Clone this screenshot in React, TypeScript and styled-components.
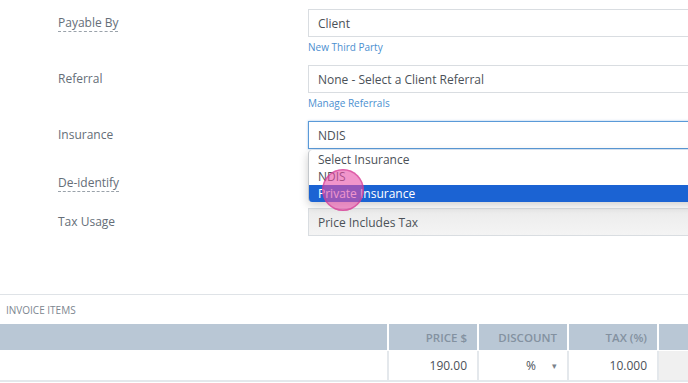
import { createGlobalStyle, styled } from 'styled-components'

const GlobalStyle = createGlobalStyle`
  html, body {
    margin: 0;
    padding: 0;
    background: #ffffff;
  }
  body {
    font-family: 'Open Sans', 'Noto Sans', sans-serif;
  }
`

const App = () => {
  return (
    <Page>
      <GlobalStyle />
      <Form>
        <Row $gap={11}>
          <Label $dotted>Payable By</Label>
          <Field>
            <Input>Client</Input>
            <Hint>New Third Party</Hint>
          </Field>
        </Row>
        <Row $gap={11}>
          <Label>Referral</Label>
          <Field>
            <Input>None - Select a Client Referral</Input>
            <Hint>Manage Referrals</Hint>
          </Field>
        </Row>
        <Row $gap={20}>
          <Label>Insurance</Label>
          <Field>
            <Input $focused>NDIS</Input>
            <Menu>
              <Option>Select Insurance</Option>
              <Option>NDIS</Option>
              <Option $active>Private Insurance</Option>
            </Menu>
            <Cursor />
          </Field>
        </Row>
        <Row $gap={11}>
          <Label $dotted>De-identify</Label>
          <Field>
            <Blank />
          </Field>
        </Row>
        <Row $gap={0}>
          <Label>Tax Usage</Label>
          <Field>
            <Input $disabled>Price Includes Tax</Input>
          </Field>
        </Row>
      </Form>

      <Section>
        <SectionTitle>Invoice Items</SectionTitle>
        <HeadRow>
          <HeadCell />
          <HeadCell>Price $</HeadCell>
          <HeadCell>Discount</HeadCell>
          <HeadCell>Tax (%)</HeadCell>
          <HeadCell />
        </HeadRow>
        <BodyRow>
          <Cell />
          <Cell>190.00</Cell>
          <Cell $split>
            <span>%</span>
            <Caret>▾</Caret>
          </Cell>
          <Cell>10.000</Cell>
          <Cell $muted />
        </BodyRow>
      </Section>
    </Page>
  )
}

const Page = styled.div`
  width: 688px;
  height: 383px;
  overflow: hidden;
  position: relative;
`

const Form = styled.div`
  display: flex;
  flex-direction: column;
  padding: 9px 0 0 58px;
`

const Row = styled.div<{ $gap: number }>`
  display: grid;
  grid-template-columns: 250px 420px;
  margin-bottom: ${p => p.$gap}px;
`

const Label = styled.div<{ $dotted?: boolean }>`
  align-self: start;
  justify-self: start;
  line-height: 28px;
  height: 28px;
  font-size: 12px;
  color: #656e78;
  ${p =>
    p.$dotted &&
    `
    text-decoration: underline dashed #9aa2aa;
    text-underline-offset: 4px;
    text-decoration-thickness: 1px;
  `}
`

const Field = styled.div`
  position: relative;
  display: flex;
  flex-direction: column;
`

const Input = styled.div<{ $focused?: boolean; $disabled?: boolean }>`
  box-sizing: border-box;
  height: 28px;
  padding: 1px 9px 0;
  line-height: 26px;
  font-size: 12px;
  color: #4b5158;
  border: 1px solid ${p => (p.$focused ? '#5a9ad8' : '#d9dde1')};
  background: ${p => (p.$disabled ? 'linear-gradient(#ebebeb, #f4f4f4)' : '#ffffff')};
  box-shadow: ${p => (p.$focused ? '0 0 2px rgba(90,154,216,0.6)' : 'none')};
`

const Hint = styled.div`
  margin-top: 3px;
  height: 14px;
  line-height: 14px;
  font-size: 10px;
  color: #4c8fd0;
`

const Blank = styled.div`
  height: 28px;
`

const Menu = styled.div`
  position: absolute;
  top: 29px;
  left: 0;
  right: 0;
  z-index: 2;
  box-sizing: border-box;
  padding: 1px 0 0;
  background: #ffffff;
  border-left: 1px solid #c4c8cc;
  border-radius: 4px 0 0 4px;
  box-shadow: 0 3px 10px rgba(0, 0, 0, 0.2);
  overflow: hidden;
`

const Option = styled.div<{ $active?: boolean }>`
  height: 17px;
  line-height: 17px;
  padding: 0 9px;
  font-size: 12px;
  color: ${p => (p.$active ? '#ffffff' : '#4b5158')};
  background: ${p => (p.$active ? '#1b63d3' : 'transparent')};
`

const Cursor = styled.div`
  position: absolute;
  left: 14px;
  top: 48px;
  width: 42px;
  height: 42px;
  border-radius: 50%;
  z-index: 3;
  background: rgba(232, 78, 168, 0.6);
  box-shadow: inset 0 0 0 1.5px rgba(205, 50, 140, 0.55);
`

const Section = styled.div`
  margin-top: 58px;
  border-top: 1px solid #dfe3e7;
`

const SectionTitle = styled.div`
  padding: 1px 6px 0;
  height: 28px;
  line-height: 28px;
  font-size: 10px;
  text-transform: uppercase;
  color: #7c8690;
`

const columns = '387px 88px 88px 88px 1fr'

const HeadRow = styled.div`
  display: grid;
  grid-template-columns: ${columns};
  column-gap: 2px;
  background: #ffffff;
`

const HeadCell = styled.div`
  height: 26px;
  line-height: 28px;
  padding: 0 10px 0 9px;
  text-align: right;
  font-size: 11.5px;
  font-weight: 600;
  text-transform: uppercase;
  color: #8391a0;
  background: #b9c7d5;
`

const BodyRow = styled.div`
  display: grid;
  grid-template-columns: ${columns};
  column-gap: 2px;
  margin-top: 1px;
  background: #e4e8ec;
  border-bottom: 2px solid #e4e8ec;
`

const Cell = styled.div<{ $split?: boolean; $muted?: boolean }>`
  height: 29px;
  line-height: 30px;
  padding: 0 10px 0 9px;
  text-align: right;
  font-size: 12px;
  color: #4b5158;
  background: ${p => (p.$muted ? '#f0f0f0' : '#ffffff')};
  ${p =>
    p.$split &&
    `
    display: flex;
    justify-content: flex-end;
    gap: 16px;
    padding-right: 10px;
  `}
`

const Caret = styled.span`
  font-size: 9px;
  color: #7a828a;
`

export default App
